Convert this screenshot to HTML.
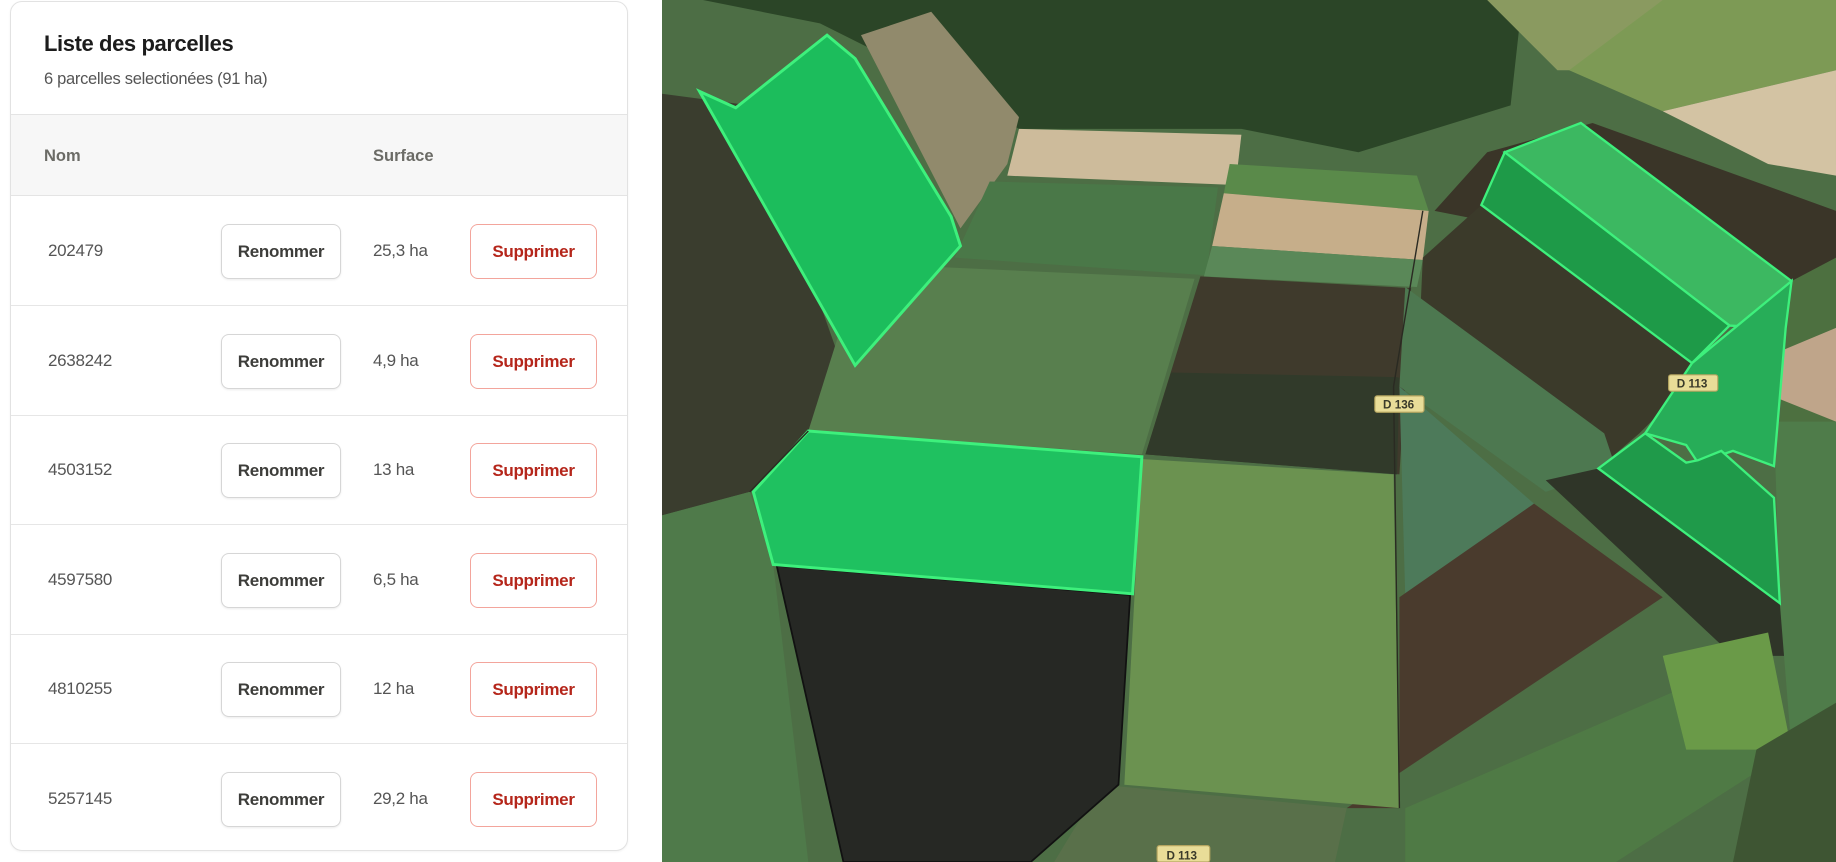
<!DOCTYPE html>
<html><head><meta charset="utf-8"><style>
*{margin:0;padding:0;box-sizing:border-box}
body{width:1836px;height:862px;overflow:hidden;background:#fff;font-family:"Liberation Sans",sans-serif;position:relative}
.card{position:absolute;left:10px;top:1px;width:618px;height:850px;border:1px solid #e2e2e2;border-radius:12px;background:#fff;overflow:hidden;box-shadow:0 1px 2px rgba(0,0,0,.05)}
.title{position:absolute;left:33px;top:29px;font-size:22px;font-weight:bold;color:#1c1c1c;letter-spacing:-0.4px}
.sub{position:absolute;left:33px;top:68px;font-size:16.5px;color:#555;letter-spacing:-0.3px}
.head{position:absolute;left:0;top:112px;width:100%;height:82px;background:#f7f7f7;border-top:1px solid #e4e4e4;border-bottom:1px solid #e4e4e4}
.head span{position:absolute;top:32px;font-size:16.5px;font-weight:bold;color:#6b6b66}
.row{position:absolute;left:0;width:100%;height:110px;border-bottom:1px solid #e6e6e6}
.row .n{position:absolute;left:37px;top:45px;font-size:17px;color:#555;letter-spacing:-0.3px}
.row .s{position:absolute;left:362px;top:45px;font-size:17px;color:#555;letter-spacing:-0.3px}
.btn{position:absolute;top:28px;height:55px;border-radius:8px;font-size:17px;font-weight:bold;display:flex;align-items:center;justify-content:center;background:#fff;letter-spacing:-0.3px}
.r{left:210px;width:120px;border:1px solid #d6d6d6;color:#3d3d3a;box-shadow:0 1px 2px rgba(0,0,0,.08)}
.d{left:459px;width:127px;border:1px solid #f3a59c;color:#b5261b}
svg{position:absolute;left:662px;top:0}
</style></head><body>
<div class="card">
<div class="title">Liste des parcelles</div>
<div class="sub">6 parcelles selectionées (91 ha)</div>
<div class="head"><span style="left:33px">Nom</span><span style="left:362px">Surface</span></div>
<div class="row" style="top:194px"><span class="n">202479</span><div class="btn r">Renommer</div><span class="s">25,3 ha</span><div class="btn d">Supprimer</div></div>
<div class="row" style="top:304px"><span class="n">2638242</span><div class="btn r">Renommer</div><span class="s">4,9 ha</span><div class="btn d">Supprimer</div></div>
<div class="row" style="top:413px"><span class="n">4503152</span><div class="btn r">Renommer</div><span class="s">13 ha</span><div class="btn d">Supprimer</div></div>
<div class="row" style="top:523px"><span class="n">4597580</span><div class="btn r">Renommer</div><span class="s">6,5 ha</span><div class="btn d">Supprimer</div></div>
<div class="row" style="top:632px"><span class="n">4810255</span><div class="btn r">Renommer</div><span class="s">12 ha</span><div class="btn d">Supprimer</div></div>
<div class="row" style="top:742px;border-bottom:none"><span class="n">5257145</span><div class="btn r">Renommer</div><span class="s">29,2 ha</span><div class="btn d">Supprimer</div></div>
</div>
<svg width="1174" height="862" viewBox="565 0 1003 736" preserveAspectRatio="none">
<rect x="565" y="0" width="1003" height="736" fill="#4d6e45"/>
<polygon points="565,0 1300,0 1290,90 1160,130 1060,110 870,110 780,60 700,20 600,0" fill="#2b4527"/>
<polygon points="1270,0 1420,0 1420,60 1330,60" fill="#8a9a60"/>
<polygon points="1420,0 1568,0 1568,60 1420,95 1340,60" fill="#7d9a55"/>
<polygon points="1420,95 1568,60 1568,150 1510,140" fill="#d3c3a3"/>
<polygon points="565,80 640,90 725,330 690,368 640,420 565,440" fill="#3a3d2e"/>
<polygon points="565,440 640,420 660,482 690,736 565,736" fill="#4f7a4a"/>
<polygon points="735,30 795,10 870,100 860,140 820,195" fill="#918a6c"/>
<polygon points="870,110 1060,115 1055,158 860,150" fill="#cdbb9b"/>
<polygon points="845,155 1040,160 1030,235 815,220" fill="#4a7848"/>
<polygon points="1050,140 1210,150 1220,180 1045,165" fill="#5a8a4a"/>
<polygon points="1045,165 1220,180 1215,222 1035,210" fill="#c6ae8a"/>
<polygon points="1035,210 1215,222 1210,245 1028,236" fill="#5a8858"/>
<polygon points="735,225 1020,238 975,388 690,368" fill="#587f4e"/>
<polygon points="1025,236 1205,246 1195,405 978,388" fill="#3f3a2c"/>
<polygon points="1000,318 1195,322 1193,405 978,388" fill="#313a2a"/>
<polygon points="1225,180 1270,130 1360,105 1568,180 1568,250 1530,240" fill="#3a3528"/>
<polygon points="1215,220 1265,175 1470,300 1400,370 1365,400 1320,410 1210,330" fill="#3b3a2a"/>
<polygon points="1200,245 1370,370 1380,400 1320,420 1195,330" fill="#4d7850"/>
<polygon points="1195,330 1310,430 1200,510" fill="#4d7a5a"/>
<polygon points="1320,410 1365,400 1520,515 1530,560 1480,560" fill="#2f3528"/>
<polygon points="1195,510 1310,430 1420,510 1150,690 1195,690" fill="#4a3b2d"/>
<polygon points="1200,690 1500,560 1530,640 1380,736 1200,736" fill="#4f7a45"/>
<polygon points="1530,240 1568,220 1568,360 1520,360" fill="#4d7040"/>
<polygon points="1520,300 1568,280 1568,360 1518,340" fill="#bfa58a"/>
<polygon points="1515,360 1568,360 1568,640 1530,640 1520,515" fill="#4f7c4a"/>
<polygon points="1420,560 1510,540 1530,640 1440,640" fill="#6a9a48"/>
<polygon points="1500,640 1568,600 1568,736 1480,736" fill="#3e5533"/>
<polygon points="975,392 1190,405 1195,690 960,670" fill="#6b9250"/>
<polygon points="940,670 1150,690 1140,736 900,736" fill="#59704a"/>
<polygon points="663,483 965,508 955,670 880,736 720,736" fill="#262824" stroke="#111" stroke-width="1.5"/>
<polygon points="597,78 628,92 706,30 730,50 812,185 820,210 730,312" fill="#1cbd5c" stroke="#3ef07c" stroke-width="2.5"/>
<polygon points="643,420 690,368 975,390 967,507 660,482" fill="#1fc160" stroke="#3ef07c" stroke-width="2.5"/>
<polygon points="1285,130 1350,105 1530,240 1510,280 1477,278" fill="#3cb861" stroke="#3ef07c" stroke-width="2"/>
<polygon points="1285,130 1477,278 1445,310 1265,175" fill="#1e9a48" stroke="#3ef07c" stroke-width="2"/>
<polygon points="1445,310 1530,240 1525,280 1515,398 1480,385 1450,395 1440,380 1405,370" fill="#27ad58" stroke="#3ef07c" stroke-width="2"/>
<polygon points="1365,400 1405,370 1440,395 1450,393 1470,385 1515,425 1520,515" fill="#1f9a4a" stroke="#3ef07c" stroke-width="2"/>
<g fill="none" stroke="#2a2a22" stroke-width="1.2">
<path d="M1215,180 L1190,330 L1195,690"/><path d="M690,368 L640,420"/>
</g>
<g font-family="Liberation Sans,sans-serif" font-size="10" font-weight="bold" fill="#3a3a2a">
<rect x="1174" y="338" width="42" height="14" rx="2" fill="#e9dd98" stroke="#b5a560"/><text x="1181" y="349">D 136</text>
<rect x="1425" y="320" width="42" height="14" rx="2" fill="#e9dd98" stroke="#b5a560"/><text x="1432" y="331">D 113</text>
<rect x="988" y="722" width="45" height="14" rx="2" fill="#e9dd98" stroke="#b5a560"/><text x="996" y="734">D 113</text>
</g>
</svg>
</body></html>
